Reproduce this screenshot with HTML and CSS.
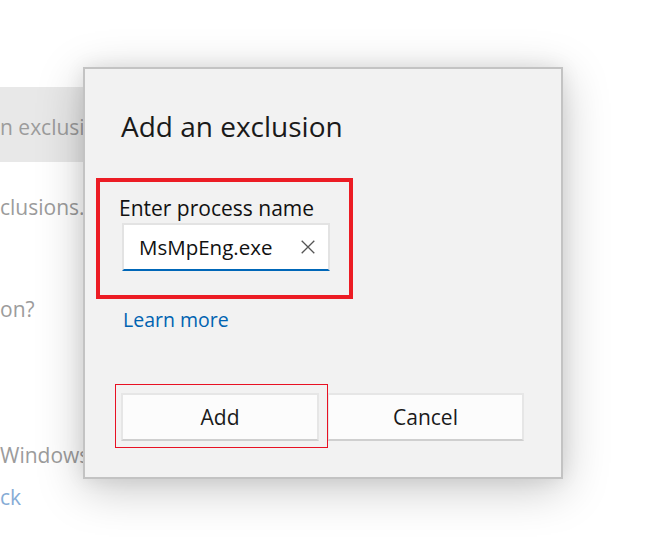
FILE: index.html
```html
<!DOCTYPE html>
<html lang="en">
<head>
<meta charset="utf-8">
<title>Add an exclusion</title>
<link rel="stylesheet" href="styles.css">
</head>
<body>
<div class="page">
  <div class="bg">
    <div class="band"><span class="bg-text">n exclusion</span></div>
    <p class="bg-text t2">clusions.</p>
    <p class="bg-text t3">on?</p>
    <p class="bg-text t4">Windows</p>
    <p class="bg-text bg-link t5">ck</p>
  </div>

  <div class="dialog" role="dialog" aria-labelledby="dlg-title">
    <h1 class="dialog-title" id="dlg-title">Add an exclusion</h1>
    <div class="highlight">
      <label class="field-label" for="proc">Enter process name</label>
      <div class="input">
        <span class="input-text" id="proc">MsMpEng.exe</span>
        <svg class="clear-icon" width="14" height="14" viewBox="0 0 14 14" aria-hidden="true">
          <path d="M0.7 0.7 L13.3 13.3 M13.3 0.7 L0.7 13.3" stroke="#555" stroke-width="1.3" fill="none"/>
        </svg>
      </div>
    </div>
    <a class="learn-more" href="#">Learn more</a>
    <div class="buttons">
      <div class="btn-wrap">
        <button class="btn">Add</button>
        <span class="btn-mark"></span>
      </div>
      <button class="btn">Cancel</button>
    </div>
  </div>
</div>
</body>
</html>
```
FILE: styles.css
```css
* { box-sizing: border-box; }
html, body { margin: 0; padding: 0; background: #ffffff; }
body { font-family: "Open Sans", "Noto Sans", sans-serif; }

.page {
  position: relative;
  width: 646px;
  height: 549px;
  overflow: hidden;
  background: #ffffff;
}

/* background (dimmed) page */
.bg {
  display: flex;
  flex-direction: column;
  padding-top: 87px;
}
.bg-text {
  margin: 0;
  font-size: 21px;
  line-height: 28px;
  color: #9c9c9c;
  white-space: nowrap;
}
.band {
  width: 320px;
  height: 75px;
  background: #e8e8e8;
  padding-top: 26px;
}
.t2 { margin-top: 31px; }
.t3 { margin-top: 74px; }
.t4 { margin-top: 118px; }
.t5 { margin-top: 14px; }
.bg-link { color: #86acd6; }

/* dialog */
.dialog {
  position: absolute;
  left: 83px;
  top: 67px;
  width: 480px;
  height: 412px;
  background: #f2f2f2;
  border: 2px solid #c3c3c3;
  box-shadow: 0 10px 44px rgba(0,0,0,0.22), 0 0 18px rgba(0,0,0,0.08);
  padding: 38px 11px 0 11px;
  display: flex;
  flex-direction: column;
  align-items: flex-start;
}
.dialog-title {
  margin: 0 0 0 25px;
  font-size: 28px;
  line-height: 38px;
  font-weight: 400;
  color: #1a1a1a;
}
.highlight {
  margin-top: 33px;
  width: 257px;
  height: 121px;
  border: 4px solid #ec1c24;
  padding: 13px 0 0 19px;
  display: flex;
  flex-direction: column;
  align-items: flex-start;
}
.field-label {
  font-size: 21px;
  line-height: 26px;
  color: #111;
}
.input {
  margin: 2px 0 0 3px;
  width: 208px;
  height: 48px;
  background: #ffffff;
  border: 2px solid #e3e3e3;
  border-bottom-color: #0067b8;
  display: flex;
  align-items: center;
  justify-content: space-between;
  padding: 0 13px 0 15px;
}
.input-text {
  font-size: 20.5px;
  line-height: 26px;
  color: #111;
}
.clear-icon { display: block; }

.learn-more {
  margin: 8px 0 0 27px;
  font-size: 19.5px;
  line-height: 26px;
  color: #0063b1;
  text-decoration: none;
}

.buttons {
  margin: 60px 0 0 25px;
  display: flex;
  gap: 8px;
}
.btn-wrap { position: relative; }
.btn {
  display: block;
  width: 198px;
  height: 48px;
  background: #fcfcfc;
  border: 2px solid #e6e6e6;
  border-bottom-color: #cfcfcf;
  font-family: inherit;
  font-size: 21px;
  color: #1a1a1a;
  padding: 0;
}
.buttons > .btn { width: 197px; }
.btn-mark {
  position: absolute;
  left: -6px;
  top: -9px;
  width: 213px;
  height: 64px;
  border: 1px solid #e81123;
  pointer-events: none;
}
```
